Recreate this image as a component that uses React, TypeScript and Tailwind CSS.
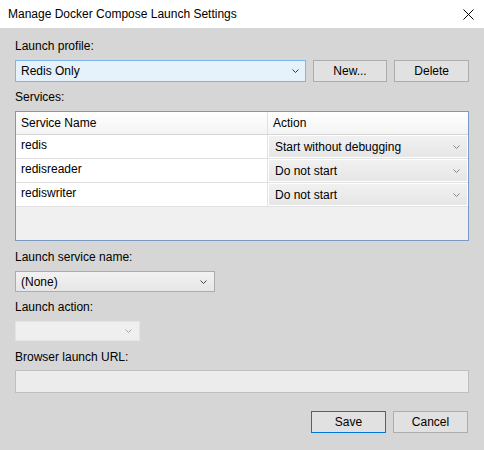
import React from 'react';

const Chevron = ({ color = '#000' }: { color?: string }) => (
  <svg width="7" height="4" viewBox="0 0 7 4" className="shrink-0">
    <path d="M0.5 0.5 L3.5 3.5 L6.5 0.5" fill="none" stroke={color} strokeWidth="1" />
  </svg>
);

const Label = ({ children, className = '' }: { children: React.ReactNode; className?: string }) => (
  <div className={'h-[16px] leading-[16px] text-[12px] text-black ' + className}>{children}</div>
);

const Button = ({ children, primary = false }: { children: React.ReactNode; primary?: boolean }) => (
  <button
    className={
      'w-[75px] h-[22px] text-[12px] text-black bg-[#e1e1e1] border ' +
      (primary ? 'border-[#0078d7]' : 'border-[#adadad]')
    }
  >
    {children}
  </button>
);

const services = [
  { name: 'redis', action: 'Start without debugging' },
  { name: 'redisreader', action: 'Do not start' },
  { name: 'rediswriter', action: 'Do not start' },
];

export default function App() {
  return (
    <div
      className="w-[484px] h-[450px] bg-[#d6d6d6] flex flex-col"
      style={{ fontFamily: '"Liberation Sans", Arial, sans-serif' }}
    >
      {/* title bar */}
      <div className="h-[28px] bg-white flex items-center justify-between pl-[8px] pr-[10px]">
        <span className="text-[12px] text-black">Manage Docker Compose Launch Settings</span>
        <svg width="11" height="11" viewBox="0 0 11 11">
          <path d="M0.5 0.5 L10.5 10.5 M10.5 0.5 L0.5 10.5" stroke="#000" strokeWidth="1" />
        </svg>
      </div>

      <div className="flex flex-col px-[15px] pt-[10px]">
        <Label>Launch profile:</Label>
        <div className="flex mt-[6px] gap-[7px]">
          <div className="w-[292px] h-[22px] border border-[#7eb4ea] bg-[#e5f1fb] flex items-center justify-between pl-[5px] pr-[6px] text-[12px]">
            <span>Redis Only</span>
            <Chevron color="#333" />
          </div>
          <Button>New...</Button>
          <Button>Delete</Button>
        </div>

        <Label className="mt-[7px]">Services:</Label>
        <div className="mt-[6px] h-[130px] border border-[#7a9cc4] bg-[#f0f0f0] flex flex-col">
          <div className="flex h-[23px] border-b border-[#d5d5d5] bg-gradient-to-b from-white to-[#f4f4f4] text-[12px]">
            <div className="w-[252px] border-r border-[#e2e2e2] pl-[5px] leading-[22px]">Service Name</div>
            <div className="flex-1 pl-[5px] leading-[22px]">Action</div>
          </div>
          {services.map((s) => (
            <div key={s.name} className="flex h-[24px] border-b border-[#e2e2e2] bg-white text-[12px]">
              <div className="w-[252px] border-r border-[#e2e2e2] pl-[5px] leading-[20px]">{s.name}</div>
              <div className="flex-1 p-[1px]">
                <div className="h-full bg-gradient-to-b from-[#f1f1f1] to-[#e6e6e6] flex items-center justify-between pl-[6px] pr-[7px]">
                  <span>{s.action}</span>
                  <Chevron color="#8a8a8a" />
                </div>
              </div>
            </div>
          ))}
        </div>

        <Label className="mt-[8px]">Launch service name:</Label>
        <div className="mt-[6px] w-[200px] h-[21px] border border-[#acacac] bg-gradient-to-b from-[#f2f2f2] to-[#e6e6e6] flex items-center justify-between pl-[5px] pr-[7px] text-[12px]">
          <span>(None)</span>
          <Chevron color="#444" />
        </div>

        <Label className="mt-[7px]">Launch action:</Label>
        <div className="mt-[6px] w-[125px] h-[20px] border border-[#e4e4e4] bg-[#efefef] flex items-center justify-end pr-[7px]">
          <Chevron color="#a8a8a8" />
        </div>

        <Label className="mt-[8px]">Browser launch URL:</Label>
        <div className="mt-[5px] h-[23px] border border-[#bfbfbf] bg-[#ececec]" />

        <div className="flex justify-end gap-[7px] mt-[18px] pr-[1px]">
          <Button primary>Save</Button>
          <Button>Cancel</Button>
        </div>
      </div>
    </div>
  );
}
